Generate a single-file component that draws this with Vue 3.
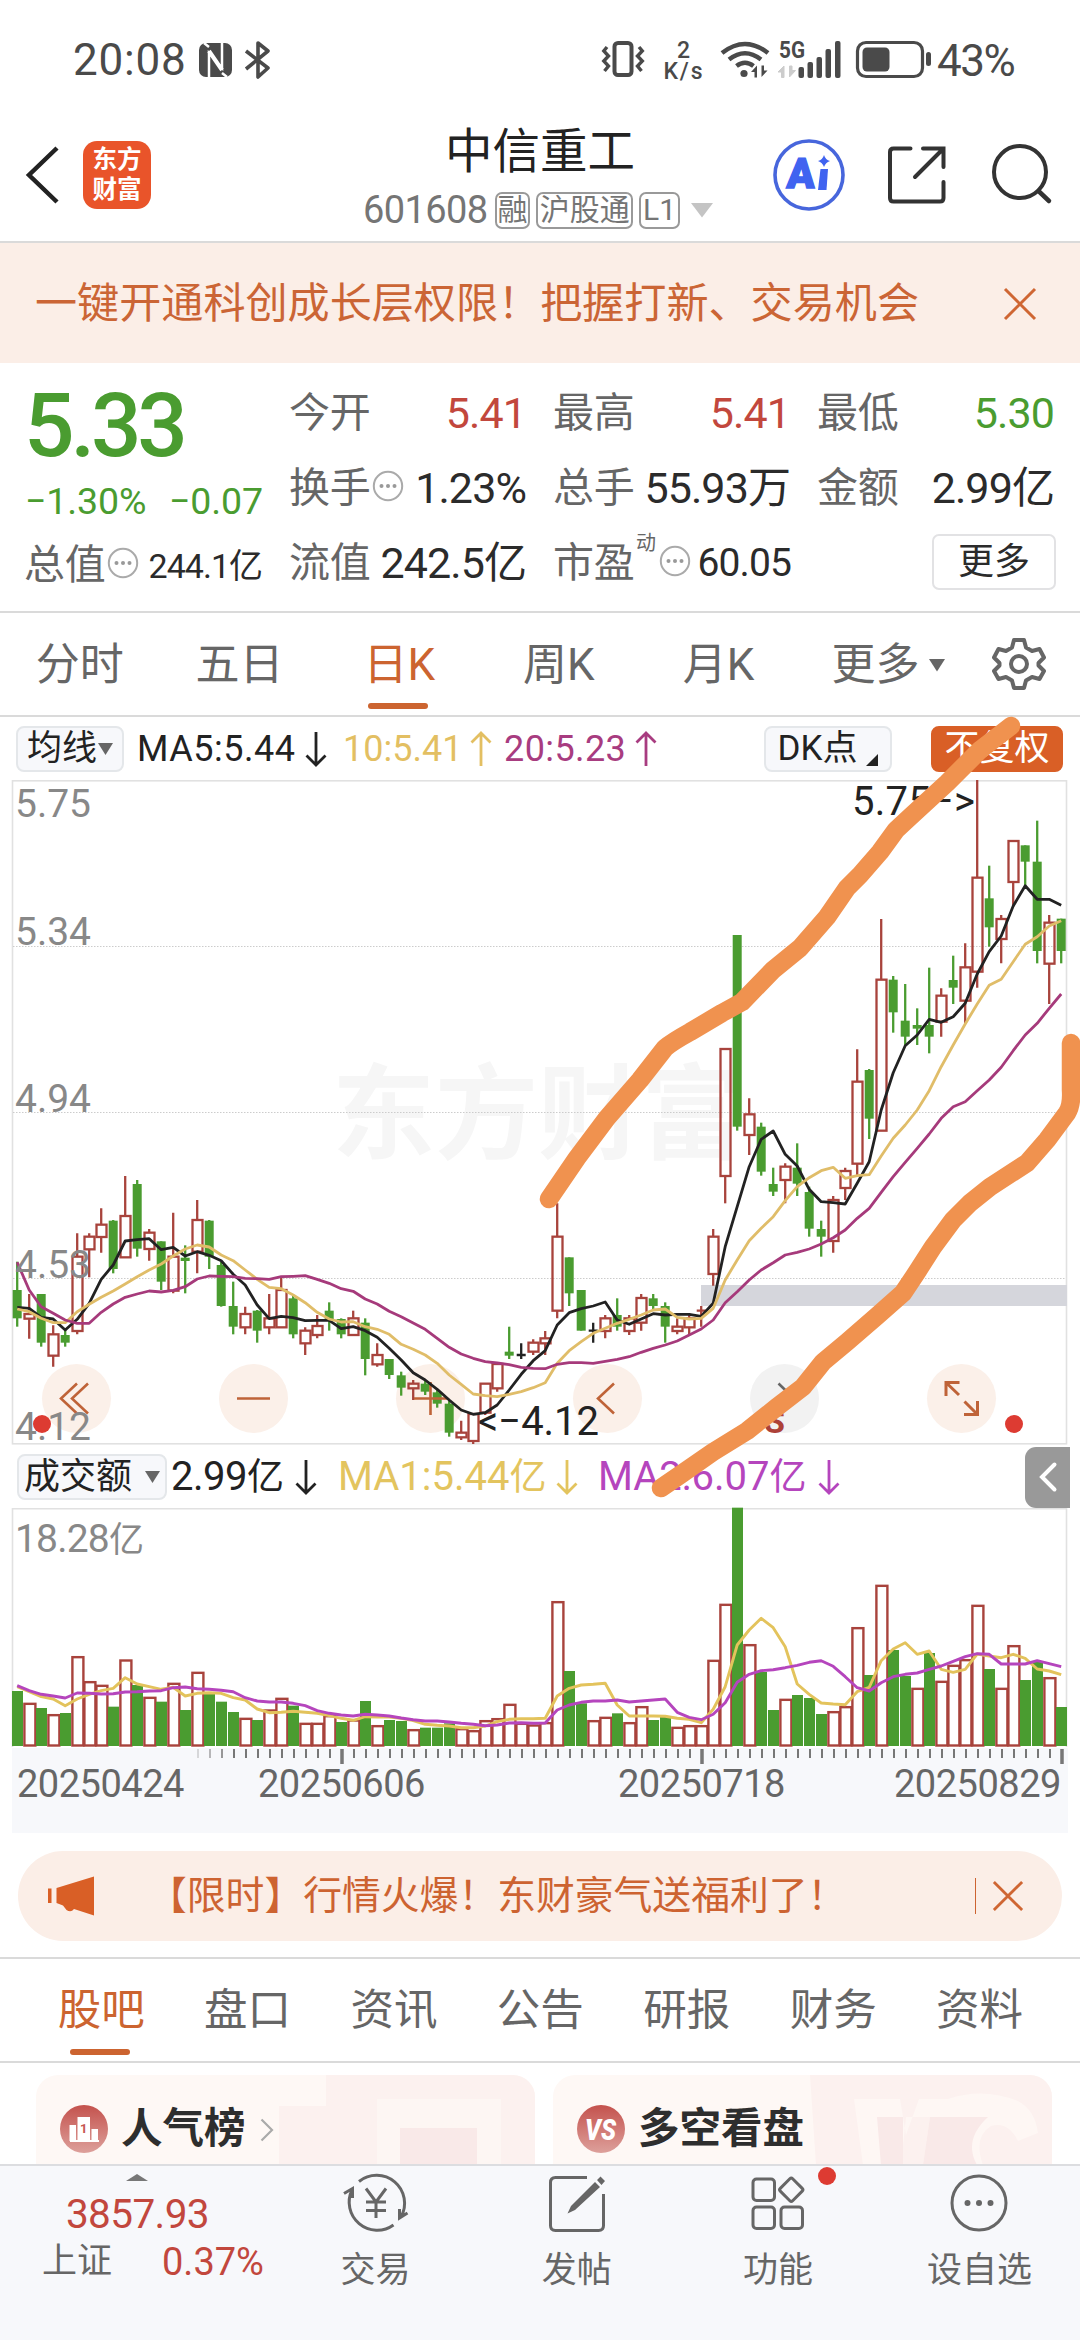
<script setup>
const RED = '#a8433c'
const GREEN = '#4a9c30'

// Candle rows are [colour, body top, body bottom, high, low] in thirds of a pixel.
const shift = (offset, rows) =>
  rows.map((r) => (Array.isArray(r) ? [r[0], ...r.slice(1).map((v) => v + offset)] : r + offset))

const candleRows = [
  ...shift(960, [
    ['g', 570, 655, 485, 680], ['r', 642, 656, 582, 716], ['g', 582, 728, 582, 740], ['r', 703, 767, 676, 800],
    ['g', 705, 728, 690, 740], ['r', 470, 693, 400, 703], ['r', 410, 448, 400, 532], ['r', 374, 411, 325, 458],
    ['g', 362, 507, 360, 520], ['r', 348, 472, 228, 472], ['g', 252, 446, 240, 470], ['r', 398, 447, 387, 482],
    ['g', 424, 545, 424, 570], ['r', 470, 572, 338, 580], ['g', 473, 483, 436, 580], ['r', 360, 455, 300, 520],
    ['g', 362, 470, 360, 507], ['g', 495, 618, 485, 620], ['g', 618, 680, 545, 703], ['r', 642, 682, 620, 703],
    ['g', 632, 692, 630, 728], ['r', 655, 682, 582, 703], ['r', 570, 682, 530, 682], ['g', 595, 703, 585, 715],
    ['r', 692, 730, 682, 765], ['r', 678, 705, 645, 715], ['g', 632, 658, 607, 692], ['g', 657, 703, 655, 715],
    ['r', 655, 705, 632, 705], ['g', 668, 777, 655, 826], ['r', 765, 793, 730, 800], ['g', 777, 825, 777, 837],
    ['g', 826, 863, 815, 887], ['r', 851, 865, 840, 900], ['g', 851, 875, 840, 885], ['g', 877, 911, 870, 923],
    ['g', 911, 998, 900, 1010], ['r', 998, 1012, 962, 1020], ['r', 942, 1023, 942, 1032], ['r', 851, 938, 851, 945],
    ['r', 792, 865, 790, 875], ['g', 755, 767, 680, 777], ['k', 765, 765, 730, 777], ['r', 728, 755, 718, 765],
    ['r', 715, 730, 693, 765], ['r', 410, 632, 310, 655], ['g', 472, 580, 472, 618], ['g', 570, 692, 570, 692],
    ['k', 692, 692, 668, 728], ['r', 655, 693, 645, 715], ['g', 645, 680, 595, 692], ['r', 655, 693, 645, 705],
    ['r', 594, 668, 582, 692], ['g', 595, 618, 582, 630], ['g', 618, 680, 607, 728], ['r', 680, 693, 655, 703],
    ['r', 655, 682, 640, 705], ['x', 632, 632, 618, 680]
  ]),
  ...shift(300, [
    ['r', 1070, 1182, 1047, 1217], ['r', 507, 888, 507, 970], ['g', 165, 740, 165, 752], ['r', 703, 765, 655, 825],
    ['g', 740, 875, 728, 887], ['g', 912, 935, 863, 948], ['r', 860, 900, 850, 970], ['g', 863, 911, 790, 948],
    ['g', 936, 1046, 920, 1070], ['g', 1047, 1070, 1022, 1130], ['r', 960, 1083, 948, 1118], ['r', 873, 924, 863, 960],
    ['r', 605, 851, 508, 885], ['g', 570, 716, 567, 777], ['r', 299, 752, 117, 752], ['g', 299, 397, 288, 458],
    ['g', 422, 470, 312, 495], ['g', 435, 446, 385, 495], ['g', 435, 470, 263, 520]
  ]),
  ...shift(-240, [
    ['r', 887, 965, 865, 1010], ['g', 840, 863, 767, 912], ['r', 802, 902, 730, 970], ['r', 533, 815, 240, 863],
    ['g', 595, 682, 497, 740], ['r', 657, 717, 645, 790], ['r', 423, 546, 423, 620], ['g', 436, 485, 436, 560],
    ['g', 485, 753, 362, 790], ['r', 668, 791, 645, 912], ['g', 656, 753, 656, 790]
  ])
]

const cx = (i) => 9.2 + i * 12
const colours = { g: GREEN, r: RED, x: RED, k: '#222' }
const candles = candleRows.map(([kind, top, bottom, high, low], i) => ({
  x: cx(i), kind, colour: colours[kind], top: top / 3, bottom: bottom / 3, high: high / 3, low: low / 3
}))

const toPath = (values) => values.map((v, i) => `${i ? 'L' : 'M'}${cx(i).toFixed(1)} ${(v / 3).toFixed(1)}`).join('')

const ma5 = toPath([
  ...shift(960, [622, 625, 652, 657, 690, 658, 610, 538, 495, 423, 419, 416, 449, 442, 468, 455, 466, 482, 523, 555,
    615, 656, 649, 653, 662, 661, 661, 686, 680, 692, 712, 745, 780, 818, 840, 868, 900, 930, 943, 938, 915, 870, 823,
    782, 752, 675, 638, 626, 618, 606, 660, 673, 657, 641, 645, 643, 643, 649]),
  ...shift(300, [1270, 1100, 980, 860, 778, 753, 823, 858, 928, 965, 968, 972, 910, 845, 690, 578, 497, 465, 418]),
  ...shift(-240, [967, 950, 910, 822, 755, 708, 618, 557, 598, 598, 616])
])
const ma10 = toPath([
  ...shift(960, [627, 635, 655, 668, 668, 635, 613, 592, 573, 552, 530, 510, 492, 468, 447, 435, 441, 465, 482, 510,
    538, 562, 566, 585, 608, 637, 657, 666, 665, 680, 688, 703, 733, 748, 765, 790, 825, 853, 882, 887, 890, 883, 875,
    863, 848, 790, 752, 725, 700, 685, 670, 658, 645, 630, 627, 652, 657, 655]),
  ...shift(300, [1285, 1200, 1140, 1082, 1045, 1010, 962, 920, 893, 872, 862, 895, 887, 884, 828, 775, 735, 690, 632]),
  ...shift(-240, [1100, 1035, 972, 912, 856, 838, 785, 733, 710, 678, 662])
])
const ma20 = toPath([
  ...shift(960, [487, 570, 620, 640, 660, 670, 670, 637, 612, 592, 582, 573, 576, 571, 560, 537, 528, 529, 530, 535,
    536, 538, 530, 529, 527, 538, 550, 566, 574, 597, 612, 634, 650, 669, 688, 715, 742, 762, 775, 785, 789, 794, 802,
    805, 806, 793, 788, 788, 790, 784, 778, 770, 757, 745, 735, 723, 705, 687]),
  ...shift(300, [1320, 1268, 1235, 1200, 1170, 1148, 1125, 1117, 1107, 1092, 1073, 1050, 1015, 985, 937, 890, 847, 805, 762]),
  ...shift(900, [115, 80, 65]),
  ...shift(-240, [1172, 1140, 1102, 1052, 1005, 970, 925, 882])
])

const volumeKinds =
  'grgrgrrrgrgrgrgrgggrgrrgrrrgrgrggrgggrrrrrrrrrggrrgrrggrrrrrgrggrgggrrrgrggrgrrrrgrrggrg'
const volumeTops = shift(-204, [
  753, 790, 804, 824, 819, 650, 725, 736, 800, 660, 735, 772, 785, 730, 810, 697, 758, 785, 816, 835, 840, 810, 775,
  797, 850, 850, 827, 846, 840, 783, 857, 840, 843, 869, 863, 863, 850, 866, 872, 842, 836, 793, 850, 855, 848, 485,
  693, 790, 842, 832, 820, 848, 800, 840, 830, 862, 857, 857, 661, 493, 203, 614, 696, 810, 778, 765, 774, 822, 815,
  800, 563, 705, 436, 630, 708, 745, 639, 724, 676, 659, 496, 687, 745, 617, 720, 666, 713, 801
])
const volumes = volumeTops.map((v, i) => ({ x: cx(i), top: v / 3, up: volumeKinds[i] === 'r' }))
const volMa1 = toPath(shift(-204, [
  740, 755, 770, 777, 797, 777, 763, 752, 745, 713, 732, 740, 748, 742, 768, 760, 758, 760, 773, 780, 807, 818, 817,
  814, 817, 820, 827, 835, 841, 830, 831, 831, 835, 842, 853, 856, 858, 863, 863, 858, 845, 838, 836, 836, 835, 768,
  745, 735, 733, 730, 795, 828, 828, 828, 829, 835, 838, 848, 808, 740, 615, 570, 535, 563, 620, 732, 763, 789, 792,
  794, 755, 742, 662, 627, 608, 643, 633, 688, 697, 688, 642, 648, 653, 643, 655, 687, 693, 704
]))
const volMa2 = toPath(shift(-204, [
  737, 752, 763, 768, 774, 759, 760, 762, 761, 756, 755, 753, 752, 743, 741, 746, 748, 751, 755, 773, 783, 786, 786,
  790, 797, 812, 820, 825, 828, 823, 825, 828, 834, 839, 843, 843, 846, 850, 853, 857, 855, 849, 848, 850, 849, 810,
  795, 787, 783, 783, 780, 786, 783, 780, 777, 817, 832, 839, 823, 788, 727, 703, 692, 689, 683, 676, 667, 662, 679,
  710, 743, 753, 728, 710, 703, 699, 688, 678, 664, 650, 641, 643, 672, 672, 672, 662, 671, 680
]))

const ticks = Array.from({ length: 73 }, (_, k) => {
  const i = k + 15
  return { x: cx(i), long: (i - 27) % 30 === 0, opacity: Math.min(1, 0.25 + k * 0.25) }
})

const buttonXs = [68.5, 245.5, 422.5, 599.5, 776.5, 953.5]
const periods = ['分时', '五日', '日K', '周K', '月K']
const sections = ['股吧', '盘口', '资讯', '公告', '研报', '财务', '资料']
</script>

<template>
  <div class="page">
    <svg class="defs" width="0" height="0" aria-hidden="true">
      <symbol id="arrow-down" viewBox="0 0 22 36"><path d="M11 1V34M1.5 24.500L11 34L20.500 24.500" fill="none" stroke="currentColor" stroke-width="2.800" /></symbol>
      <symbol id="arrow-up" viewBox="0 0 22 36"><path d="M11 35V2M1.500 11.500L11 2L20.500 11.500" fill="none" stroke="currentColor" stroke-width="2.800" /></symbol>
      <symbol id="info" viewBox="0 0 32 32"><circle cx="16" cy="16" r="14.200" fill="none" stroke="#aaa" stroke-width="2" /><g fill="#999"><circle cx="9.500" cy="16" r="2" /><circle cx="16" cy="16" r="2" /><circle cx="22.500" cy="16" r="2" /></g></symbol>
      <symbol id="close" viewBox="0 0 34 34"><path d="M2 2L32 32M32 2L2 32" fill="none" stroke="#cf6633" stroke-width="3" /></symbol>
    </svg>

    <header class="status">
      <span class="clock">20:08</span>
      <svg class="nfc" width="34" height="34" viewBox="0 0 34 34">
        <rect x="0" y="0" width="33" height="34" rx="7" fill="#4a4a4a" />
        <path d="M10 34V10L23 25V0" fill="none" stroke="#fff" stroke-width="2.500" />
        <path d="M10 8L23 27" stroke="#fff" stroke-width="4" />
        <path d="M5 0L10 4M28 34L23 30" stroke="#fff" stroke-width="2.500" />
      </svg>
      <svg class="bt" width="28" height="38" viewBox="0 0 28 38"><path d="M2 10L24 27L14 36V2L24 10L2 28" fill="none" stroke="#4a4a4a" stroke-width="3.600" stroke-linejoin="round" /></svg>
      <svg class="sys" width="333" height="42" viewBox="0 0 333 42">
        <g fill="none" stroke="#4a4a4a">
          <rect x="12.500" y="4" width="17" height="32" rx="3.500" stroke-width="4" />
          <path d="M5 9L1.800 13L6.500 18L1.800 23L6.500 28L2.500 33M37 9L40.300 13L35.500 18L40.300 23L35.500 28L39.500 33" stroke-width="3.400" transform="translate(0,-1)" />
          <path d="M120 14Q143 -4 166 14" stroke-width="4.500" />
          <path d="M127 20.500Q143 8 159 20.500" stroke-width="4.500" />
          <path d="M134.500 27Q143 20.500 151.500 27" stroke-width="4.500" />
          <rect x="255.500" y="3.500" width="65" height="34" rx="8.500" stroke-width="3.200" />
        </g>
        <circle cx="142" cy="34.500" r="3.600" fill="#4a4a4a" />
        <path d="M149 33L155 26.500V38.500H152.500V33ZM165.500 31.500L159.500 38V26.500H162V31.500Z" fill="#4a4a4a" />
        <path d="M176 33L182 27V38.500H179.500V33ZM193.500 31.500L187.500 38V27H190V31.500Z" fill="#ccc" stroke="#ccc" />
        <g fill="#4a4a4a">
          <rect x="196.500" y="28" width="5.500" height="11" rx="2" /><rect x="205.500" y="23" width="5.500" height="16" rx="2" />
          <rect x="214.500" y="18" width="5.500" height="21" rx="2" /><rect x="223.500" y="10" width="5.500" height="29" rx="2" />
          <rect x="233" y="2" width="5.500" height="37" rx="2" /><rect x="260.500" y="8.500" width="27" height="24" rx="4.500" />
          <rect x="324" y="13" width="5" height="14" rx="2.500" />
          <g font-family="Roboto, sans-serif" font-weight="500">
            <text x="75" y="18.500" font-size="23">2</text><text x="61.500" y="39.500" font-size="23" textLength="39">K/s</text>
            <text x="177" y="19" font-size="24" font-weight="700" textLength="26" lengthAdjust="spacingAndGlyphs">5G</text>
          </g>
        </g>
      </svg>
      <span class="percent">43%</span>
    </header>

    <nav class="titlebar">
      <svg class="back" width="34" height="58" viewBox="0 0 34 58"><path d="M31 2L3 29L31 56" fill="none" stroke="#222" stroke-width="4.500" /></svg>
      <div class="logo"><span>东方</span><span>财富</span></div>
      <div class="stock">
        <h1>中信重工</h1>
        <div class="code">
          <span class="num">601608</span><i class="t1">融</i><i class="t2">沪股通</i><i class="t3">L1</i>
          <svg width="22" height="15" viewBox="0 0 22 15"><path d="M0 0H22L11 14.500Z" fill="#c4c4c4" /></svg>
        </div>
      </div>
      <div class="tools">
        <svg width="74" height="74" viewBox="0 0 74 74">
          <circle cx="37" cy="37" r="34" fill="none" stroke="#4766dc" stroke-width="3.600" />
          <text x="14" y="50" font-family="Roboto, sans-serif" font-weight="900" font-size="42" fill="#4063f0" stroke="#4063f0" stroke-width="1.500" textLength="28" lengthAdjust="spacingAndGlyphs" transform="skewX(-3) translate(3,0)">A</text>
          <path d="M48.500 31H56L54.500 52H46Z" fill="#4063f0" />
          <path d="M52 17Q53.500 22 58 23Q53.500 24.500 52 29Q50.500 24.500 46 23Q50.500 22 52 17Z" fill="#4063f0" />
        </svg>
        <svg class="share" width="60" height="60" viewBox="0 0 60 60"><path d="M23.500 3.500H6.500Q3 3.500 3 7V53Q3 56.500 6.500 56.500H53Q56.500 56.500 56.500 53V37M36 3.500H56.500V22M55 5L28 32" fill="none" stroke="#333" stroke-width="4" stroke-linecap="round" /></svg>
        <svg width="64" height="64" viewBox="0 0 64 64"><circle cx="31" cy="30" r="26" fill="none" stroke="#333" stroke-width="4" /><path d="M49.500 49L60 59" stroke="#333" stroke-width="4.500" stroke-linecap="round" /></svg>
      </div>
    </nav>

    <div class="notice"><span>一键开通科创成长层权限！把握打新、交易机会</span><svg width="34" height="34"><use href="#close" /></svg></div>

    <section class="quote">
      <div class="q-price">
        <strong>5.33</strong>
        <p class="change"><span>−1.30%</span><span>−0.07</span></p>
        <p class="cell small"><label>总值</label><svg class="info"><use href="#info" /></svg><b>244.1亿</b></p>
      </div>
      <div class="q-col">
        <p class="cell"><label>今开</label><b class="red">5.41</b></p>
        <p class="cell"><label>换手</label><svg class="info"><use href="#info" /></svg><b>1.23%</b></p>
        <p class="cell"><label>流值</label><b>242.5亿</b></p>
      </div>
      <div class="q-col">
        <p class="cell"><label>最高</label><b class="red">5.41</b></p>
        <p class="cell"><label>总手</label><b>55.93万</b></p>
        <p class="cell pe"><label>市盈<sup>动</sup></label><svg class="info"><use href="#info" /></svg><b>60.05</b></p>
      </div>
      <div class="q-col">
        <p class="cell"><label>最低</label><b class="green">5.30</b></p>
        <p class="cell"><label>金额</label><b>2.99亿</b></p>
        <p class="cell end"><button>更多</button></p>
      </div>
    </section>

    <nav class="periods">
      <a v-for="(p, i) in periods" :key="p" :class="{ active: i === 2 }">{{ p }}</a>
      <a class="more">更多<svg width="16" height="13" viewBox="0 0 16 13"><path d="M0 0H16L8 12.500Z" fill="#666" /></svg></a>
      <svg class="gear" width="54" height="54" viewBox="0 0 54 54"><g fill="none" stroke="#666" stroke-width="4" stroke-linejoin="round"><path d="M22 3H32L34 10.500L40 14L47.500 12L52 20.500L46.500 26V28.500L52 34L47.500 42L40 40L34 43.500L32 51H22L20 43.500L14 40L6.500 42L2 34L7.500 28.500V26L2 20.500L6.500 12L14 14L20 10.500Z" /><circle cx="27" cy="27" r="8" /></g></svg>
    </nav>

    <div class="legend">
      <button class="pick">均线<svg width="15" height="12" viewBox="0 0 15 12"><path d="M0 0H15L7.500 12Z" fill="#666" /></svg></button>
      <span class="m5">MA5:5.44</span><svg class="arr"><use href="#arrow-down" /></svg>
      <span class="m10">10:5.41</span><svg class="arr gold"><use href="#arrow-up" /></svg>
      <span class="m20">20:5.23</span><svg class="arr magenta"><use href="#arrow-up" /></svg>
      <button class="dk">DK点<svg width="12" height="12" viewBox="0 0 12 12"><path d="M12 0V12H0Z" fill="#222" /></svg></button>
      <button class="rights">不复权</button>
    </div>

    <svg class="kline" width="1062" height="666" viewBox="0 0 1062 666">
      <text class="mark" x="324" y="371" textLength="412">东方财富</text>
      <rect x="4.500" y="0.800" width="1054" height="663" fill="none" stroke="#e1e1e1" stroke-width="1.600" />
      <g stroke="#ccc" stroke-dasharray="1.500 1.500"><path d="M5 166.500H1058M5 332.500H1058M5 498.500H1058" /></g>
      <rect x="693" y="505" width="366" height="21" fill="#d5d6dc" />
      <circle v-for="(x, i) in buttonXs" :key="x" :cx="x" cy="618.500" r="34.500" :fill="i === 4 ? '#f2f2f2' : '#fbf0e9'" />
      <g v-for="c in candles" :key="c.x" :stroke="c.colour" stroke-width="2.300">
        <path v-if="c.kind === 'g'" :d="`M${c.x} ${c.high}V${c.low}`" />
        <rect v-if="c.kind === 'g'" :x="c.x - 4.500" :y="c.top" width="9" :height="c.bottom - c.top" :fill="c.colour" stroke="none" />
        <path v-if="c.kind === 'r'" :d="`M${c.x} ${c.high}V${c.top}M${c.x} ${c.bottom}V${c.low}`" />
        <rect v-if="c.kind === 'r'" :x="c.x - 4.700" :y="c.top" width="10" :height="c.bottom - c.top" fill="none" />
        <path v-if="c.kind === 'k' || c.kind === 'x'" :d="`M${c.x} ${c.high}V${c.low}M${c.x - 4.5} ${c.top}h9`" />
      </g>
      <g fill="none" stroke="#bf6338" stroke-width="2.600">
        <path d="M69 603.500L53 618.500L69 633.500M80 603.500L64 618.500L80 633.500M229 618.500H262M406 618.500H439M422.500 602V635M606 603.500L590 618.500L606 633.500" />
        <path d="M951.500 602.500H938V616M938 602.500L951 615M956 634.500H969.500V621M969.500 634.500L956.500 621.500" stroke-width="3" />
        <path d="M770.500 603.500L786 618.500L770.500 633.500" stroke="#666" />
      </g>
      <text class="sell" x="756" y="653">S</text>
      <g fill="none" stroke-width="2.800" stroke-linejoin="round">
        <path :d="ma5" stroke="#222" /><path :d="ma10" stroke="#e0bd69" /><path :d="ma20" stroke="#a63a7b" />
      </g>
      <g class="price"><text x="7" y="37">5.75</text><text x="7" y="165">5.34</text><text x="7" y="332">4.94</text><text x="7" y="498">4.53</text><text x="7" y="660">4.12</text></g>
      <circle cx="34" cy="644" r="9" fill="#dd3b32" /><circle cx="1006" cy="644" r="9" fill="#dd3b32" />
      <g class="extreme"><text x="470" y="655" textLength="121">&lt;−4.12</text><text x="844" y="35" textLength="123">5.75−&gt;</text></g>
    </svg>

    <div class="legend vol">
      <button class="pick amount">成交额<svg width="15" height="12" viewBox="0 0 15 12"><path d="M0 0H15L7.500 12Z" fill="#666" /></svg></button>
      <span class="v0">2.99<em>亿</em></span><svg class="arr"><use href="#arrow-down" /></svg>
      <span class="v1">MA1:5.44<em>亿</em></span><svg class="arr gold2"><use href="#arrow-down" /></svg>
      <span class="v2">MA2:6.07<em>亿</em></span><svg class="arr violet"><use href="#arrow-down" /></svg>
      <div class="fold"><svg width="18" height="30" viewBox="0 0 18 30"><path d="M15.500 2.500L3 15L15.500 27.500" fill="none" stroke="#fff" stroke-width="4" stroke-linecap="round" /></svg></div>
    </div>

    <svg class="volume" width="1062" height="326" viewBox="0 0 1062 326">
      <rect x="4" y="240" width="1056" height="85" fill="#f7f8fb" />
      <path d="M4.500 239V0.800H1058.500V239" fill="none" stroke="#e1e1e1" stroke-width="1.600" />
      <template v-for="v in volumes" :key="v.x">
        <rect v-if="v.up" :x="v.x - 4.800" :y="v.top + 0.500" width="11" :height="237 - v.top" fill="#fff" :stroke="RED" stroke-width="2.400" />
        <rect v-else :x="v.x - 5.200" :y="v.top" width="11" :height="238 - v.top" :fill="GREEN" />
      </template>
      <g fill="none" stroke-width="2.900" stroke-linejoin="round"><path :d="volMa1" stroke="#e3c35c" /><path :d="volMa2" stroke="#b545bd" /></g>
      <path v-for="t in ticks" :key="t.x" :d="`M${t.x + 0.8} 241V${t.long ? 256 : 250}`" stroke="#777" :stroke-width="t.long ? 3.5 : 2" :opacity="t.opacity" />
      <g class="price"><text x="7" y="44" letter-spacing="-.8">18.28<tspan font-size="35">亿</tspan></text></g>
      <g class="dates"><text x="9" y="289">20250424</text><text x="250" y="289">20250606</text><text x="610" y="289">20250718</text><text x="886" y="289">20250829</text></g>
    </svg>

    <div class="promo">
      <svg width="48" height="40" viewBox="0 0 48 40"><path d="M1 12.500H4.500V27H1ZM9.500 12L47 0.500V39.500L27 33Q24 37 19.500 34L16 29.500L9.500 27Z" fill="#d95f26" /></svg>
      <span>【限时】行情火爆！东财豪气送福利了！</span><i></i>
      <svg class="x" width="32" height="32"><use href="#close" width="32" height="32" /></svg>
    </div>

    <nav class="sections"><a v-for="(s, i) in sections" :key="s" :class="{ active: i === 0 }">{{ s }}</a></nav>

    <div class="cards">
      <article class="card">
        <svg class="deco" width="499" height="90" viewBox="0 0 499 90"><path d="M290 0H499V90H243V31H290Z" fill="#fcf1ef" /><path d="M341 24H465V90H341Z" fill="#fdf6f3" /><path d="M364 53H441V90H364Z" fill="#f9e9e8" /></svg>
        <svg class="badge" width="48" height="48" viewBox="0 0 48 48"><circle cx="24" cy="24" r="24" fill="url(#badge)" /><g fill="#fff"><path d="M9.500 20H16V36H9.500ZM17.500 12H30V36H17.500ZM31.500 24H38V36H31.500Z" /><path d="M10 35H39V37H10Z" /></g><text x="20" y="28" font-family="Roboto, sans-serif" font-size="13" font-weight="700" fill="#c65550">1</text><defs><linearGradient id="badge" x1="0" y1="0" x2="0" y2="1"><stop offset="0" stop-color="#c4524d" /><stop offset="1" stop-color="#dda09b" /></linearGradient></defs></svg>
        <h2>人气榜</h2>
        <svg class="go" width="14" height="24" viewBox="0 0 14 24"><path d="M1.500 1.500L12 12L1.500 22.500" fill="none" stroke="#aaa" stroke-width="2.200" /></svg>
      </article>
      <article class="card">
        <svg class="deco" width="499" height="90" viewBox="0 0 499 90"><path d="M257 0H499V90H263Z" fill="#fcf1ef" /><path d="M301 24H347L353 60L366 24H395Q430 12 465 26Q482 35 485 58L465 66Q455 46 438 51Q420 62 430 90H370L377 42H353L348 90H310Z" fill="#fef7f4" /><path d="M324 42H350V90H328ZM377 42H435Q410 65 424 90H370Z" fill="#f9e9e8" /></svg>
        <svg class="badge" width="48" height="48" viewBox="0 0 48 48"><circle cx="24" cy="24" r="24" fill="url(#badge)" /><text x="8" y="34.500" font-family="Roboto, sans-serif" font-size="29" font-weight="900" font-style="italic" fill="#fff" textLength="31" lengthAdjust="spacingAndGlyphs">VS</text></svg>
        <h2>多空看盘</h2>
      </article>
    </div>

    <footer class="bottom">
      <div class="index">
        <svg width="22" height="7" viewBox="0 0 22 7"><path d="M11 0L22 7H0Z" fill="#777" /></svg>
        <b>3857.93</b>
        <p><span>上证</span><em>0.37%</em></p>
      </div>
      <a><svg width="68" height="60" viewBox="0 0 68 60"><g fill="none" stroke="#666" stroke-width="3"><path d="M17 8.500A28 28 0 0 1 59 44M51.500 52A28 28 0 0 1 10 17M2 20.500L10.500 15.500V25M65.500 40L57.500 45V36M24 15.500L34 29L44 15.500M34 29V45M24 29H44M24 37.500H44" /></g></svg><span>交易</span></a>
      <a><svg width="56" height="60" viewBox="0 0 56 60"><path d="M38 4.500H6.500Q1.500 4.500 1.500 9.500V52.500Q1.500 57.500 6.500 57.500H49.500Q54.500 57.500 54.500 52.500V21" fill="none" stroke="#666" stroke-width="3" /><path d="M46 9L51 14L26 37L18.500 40.500L22 33ZM48 7L51.500 3.500L56 8L52.500 12Z" fill="#666" /></svg><span>发帖</span></a>
      <a><svg width="54" height="60" viewBox="0 0 54 60"><g fill="none" stroke="#666" stroke-width="3"><rect x="2" y="6" width="21.500" height="21.500" rx="3.500" /><rect x="2" y="34" width="21.500" height="21.500" rx="3.500" /><rect x="30" y="34" width="21.500" height="21.500" rx="3.500" /><rect x="31.500" y="8" width="17.500" height="17.500" rx="2" transform="rotate(45 40.250 16.750)" /></g></svg><span>功能</span><i class="dot"></i></a>
      <a><svg width="60" height="60" viewBox="0 0 60 60"><circle cx="30" cy="30" r="27" fill="none" stroke="#666" stroke-width="3" /><g fill="#666"><circle cx="18.500" cy="30" r="3" /><circle cx="30" cy="30" r="3" /><circle cx="41.500" cy="30" r="3" /></g></svg><span>设自选</span></a>
    </footer>

    <svg class="strokes" width="1080" height="1520" viewBox="0 0 1080 1520">
      <g fill="none" stroke="#f0924f" stroke-width="18.500" stroke-linecap="round" stroke-linejoin="round">
        <path d="M549 1199L577 1158L607 1118L640 1080L665 1048Q672 1042 690 1032L722 1013L742 1002L773 970L800 948L827 917L847 888L860 875L880 852L896 830L910 817L947 783L980 750L1011 726" />
        <path d="M661 1488L680 1475L713 1452L747 1431L777 1407L803 1387L823 1362L847 1342L877 1316L903 1293L917 1272L933 1247L953 1220L970 1203L990 1187L1027 1163L1047 1140L1067 1113Q1072 1105 1071 1090V1043" />
      </g>
    </svg>
  </div>
</template>

<style>
body { margin: 0; background: #fff; }
</style>

<style scoped>
.page { position: relative; width: 1080px; height: 2340px; overflow: hidden; display: flex; flex-direction: column; background: #fff; font-family: Roboto, "Noto Sans CJK SC", sans-serif; color: #222; line-height: 1; }
.page *, .page { box-sizing: border-box; }
.page > * { flex-shrink: 0; }
.page svg { display: block; flex-shrink: 0; overflow: visible; }
.page .defs { position: absolute; }
h1, h2, p { margin: 0; font-weight: 400; }
i, em { font-style: normal; }
button { font: inherit; color: inherit; padding: 0; margin: 0; }
.red { color: #c2473d; }
.green { color: #4a9c30; }

.status { display: flex; height: 115px; padding: 0 64px 0 73px; color: #4a4a4a; }
.clock { font-size: 44px; margin-top: 38px; width: 126px; letter-spacing: .8px; }
.nfc { margin-top: 43px; }
.bt { margin: 41px 0 0 11px; }
.sys { margin: 39px 0 0 auto; }
.percent { font-size: 44px; margin: 39px 0 0 2px; width: 79px; letter-spacing: -1.500px; white-space: nowrap; }

.titlebar { display: flex; height: 128px; border-bottom: 2px solid #dadada; padding-left: 26px; }
.back { margin-top: 31px; }
.logo { width: 68px; height: 68px; margin: 26px 0 0 23px; border-radius: 14px; background: #e9542a; color: #fff; font-size: 24.500px; font-weight: 700; display: flex; flex-direction: column; align-items: center; justify-content: center; gap: 5px; }
.stock { width: 350px; margin-left: 212px; display: flex; flex-direction: column; }
h1 { font-size: 47.500px; height: 47px; margin: 14px 0 0 82px; }
.code { display: flex; align-items: center; height: 38px; margin-top: 15px; color: #757575; white-space: nowrap; }
.code .num { font-size: 38px; letter-spacing: -.6px; width: 132px; }
.code i { height: 37px; border: 2px solid #999; border-radius: 7px; font-size: 30px; display: flex; align-items: center; justify-content: center; margin-right: 6px; }
.t1 { width: 36px; } .t2 { width: 97px; } .t3 { width: 41px; }
.code svg { margin-left: 5px; }
.tools { display: flex; margin-left: 59px; padding-top: 23px; }
.share { margin: 7px 42px 0 41px; }
.tools > svg:last-child { margin-top: 4px; }

.notice { height: 120px; background: #fbeee7; color: #cb6535; display: flex; align-items: center; justify-content: space-between; padding: 2px 43px 0 35px; font-size: 42.100px; }

.quote { height: 250px; display: flex; border-bottom: 2px solid #dadada; color: #2b2b2b; }
.q-price { width: 238px; margin-left: 25px; }
.q-price strong { display: block; font-size: 89px; font-weight: 500; color: #4a9c30; letter-spacing: -4.200px; margin: 18px 0 0 -1px; height: 90px; }
.change { display: flex; justify-content: space-between; color: #4a9c30; font-size: 37.500px; letter-spacing: -.1px; height: 56px; padding-top: 12px; white-space: nowrap; }
.q-col { width: 238px; margin-left: 26px; padding-top: 13px; }
.cell { height: 75px; display: flex; align-items: center; white-space: nowrap; }
.small { position: relative; top: 1px; left: -1px; }
.cell label { font-size: 41px; color: #666; position: relative; letter-spacing: -.2px; }
.cell b { font-weight: 400; font-size: 43px; letter-spacing: -.9px; margin-left: auto; padding-right: 1px; }
.info { width: 32px; height: 32px; margin: -5px 0 0 1px; }
.small b { font-size: 34px; letter-spacing: -1px; padding: 0; }
.cell.pe b { font-size: 39px; padding: 0; }
.pe sup { position: absolute; left: 83px; top: -10px; font-size: 20px; line-height: 1; }
.cell.pe .info { margin-left: 24px; }
.end button { width: 124px; height: 56px; margin: -3px 0 0 auto; position: relative; left: 1px; border: 2px solid #e2e2e4; border-radius: 7px; background: #fff; font-size: 36px; }

.periods { height: 104px; display: flex; align-items: center; border-bottom: 2px solid #dadada; color: #666; font-size: 44px; }
.periods a { width: 159.700px; height: 102px; padding-top: 2px; display: flex; align-items: center; justify-content: center; position: relative; }
.active { color: #cc6430; }
.active::after { content: ""; position: absolute; width: 60px; height: 6px; border-radius: 3px; background: #cc6430; left: calc(50% - 31px); bottom: 6px; }
.periods .more { width: 180px; gap: 10px; }
.gear { margin-left: 14px; }

.legend { height: 63px; display: flex; align-items: center; padding-left: 16px; font-size: 36px; white-space: nowrap; }
.legend button { display: flex; align-items: center; justify-content: center; height: 46px; border: 2px solid #e4e7ea; border-radius: 8px; background: #f7f8fb; font-size: 35px; }
.legend span { display: block; }
.pick { width: 108px; gap: 1px; }
.arr { width: 22px; height: 36px; }
.m5 { width: 168px; margin-left: 13px; letter-spacing: .5px; }
.m10 { width: 127px; margin-left: 16px; color: #e3bf62; }
.gold { color: #e3bf62; }
.m20 { width: 131px; margin-left: 12px; color: #a83c80; letter-spacing: .4px; }
.magenta { color: #a83c80; }
.legend .dk { width: 128px; margin-left: 107px; align-items: center; gap: 9px; }
.dk svg { margin-top: 22px; }
.legend .rights { width: 132px; margin-left: 39px; background: #d95f26; border-color: #d95f26; color: #fff; }

.kline { margin-left: 8px; height: 666px; }
.mark { font: 700 103px "Noto Sans CJK SC", sans-serif; fill: #f6f6f6; }
.price { font-size: 39px; fill: #888; }
.extreme { font-size: 40px; fill: #222; }
.sell { font: 700 34px Roboto, sans-serif; fill: #ad4138; }

.legend.vol { height: 62px; font-size: 40px; padding-left: 17px; }
.vol em { font-size: 37px; }
.legend .amount { width: 150px; font-size: 36px; gap: 13px; }
.v0 { width: 124px; margin-left: 4px; letter-spacing: -.5px; }
.v1 { width: 218px; margin-left: 21px; color: #e3c45e; }
.gold2 { color: #e3c45e; }
.v2 { width: 220px; margin-left: 20px; color: #b545bd; }
.violet { color: #b545bd; }
.fold { width: 45px; height: 61px; margin-left: 185px; border-radius: 11px 0 0 11px; background: #999; display: flex; align-items: center; justify-content: center; }

.volume { margin-left: 8px; }
.dates { font-size: 38px; fill: #666; letter-spacing: -.5px; }

.promo { width: 1044px; height: 90px; margin: 17px 18px 0; border-radius: 45px; background: #fbeee7; color: #cd6331; display: flex; align-items: center; font-size: 38.800px; padding-left: 29px; }
.promo span { margin-left: 53px; width: 831px; white-space: nowrap; }
.promo i { width: 1px; height: 36px; margin-left: -4px; background: #cd6331; }
.promo .x { margin-left: 16px; }

.sections { height: 106px; margin-top: 16px; border-top: 2px solid #dadada; border-bottom: 2px solid #dadada; display: flex; padding-left: 28px; color: #666; font-size: 43.500px; }
.sections a { width: 146.400px; padding-top: 2px; display: flex; align-items: center; justify-content: center; position: relative; }

.cards { height: 101px; padding: 12px 0 0 36px; display: flex; gap: 18px; overflow: hidden; }
.card { position: relative; width: 499px; height: 120px; border-radius: 22px; background: #fef8f5; overflow: hidden; display: flex; padding: 30px 0 0 24px; }
.deco { position: absolute; left: 0; top: 0; }
.badge { position: relative; }
h2 { position: relative; font-size: 41.500px; font-weight: 700; margin: 3px 0 0 13px; color: #2e2e2e; }
.go { position: relative; margin: 13px 0 0 14px; }

.bottom { height: 176px; border-top: 2px solid #dcdde0; background: #f7f8fb; display: flex; color: #666; }
.index { width: 275px; display: flex; flex-direction: column; align-items: center; padding-top: 8px; }
.index b { font-weight: 400; font-size: 40.500px; color: #c2473d; margin-top: 13px; letter-spacing: -.6px; }
.index p { display: flex; align-items: center; gap: 50px; margin-top: 8px; font-size: 35px; width: 100%; padding-left: 42px; }
.index em { color: #c2473d; font-size: 38px; letter-spacing: 0; }
.bottom a { width: 201.300px; display: flex; flex-direction: column; align-items: center; font-size: 35px; padding-top: 7px; position: relative; }
.bottom a span { margin-top: 20px; }
.dot { position: absolute; width: 18px; height: 18px; border-radius: 9px; background: #dd3b32; left: 141px; top: 1px; }

.page .strokes { position: absolute; left: 0; top: 0; }
</style>
